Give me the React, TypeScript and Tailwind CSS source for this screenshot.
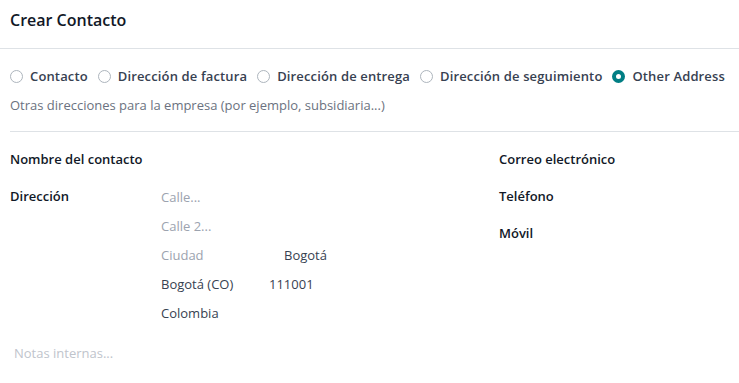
import { useState } from 'react'

const TYPES = [
  'Contacto',
  'Dirección de factura',
  'Dirección de entrega',
  'Dirección de seguimiento',
  'Other Address',
]

function Radio({ label, checked, onClick }: { label: string; checked: boolean; onClick: () => void }) {
  return (
    <label className="flex items-center gap-[7px] cursor-pointer" onClick={onClick}>
      <span
        className={`w-[13px] h-[13px] rounded-full flex-shrink-0 bg-white ${
          checked ? 'border-[4px] border-[#017e84]' : 'border border-[#adb5bd]'
        }`}
      />
      <span className="font-semibold tracking-[0.14px] text-[#374151]">{label}</span>
    </label>
  )
}

export default function App() {
  const [type, setType] = useState('Other Address')

  return (
    <div className="w-[739px] h-[383px] bg-white text-[13px] text-[#374151] font-['Open_Sans',sans-serif]">
      {/* Cabecera */}
      <div className="h-[49px] flex items-center px-[10px] border-b border-[#dee2e6]">
        <h1 className="text-[16px] font-semibold text-[#111827] -mt-[9px]">Crear Contacto</h1>
      </div>

      <div className="pl-[10px]">
        {/* Tipo de dirección */}
        <div className="flex items-center gap-[10px] pt-[10px] h-[45px] whitespace-nowrap">
          {TYPES.map(t => (
            <Radio key={t} label={t} checked={type === t} onClick={() => setType(t)} />
          ))}
        </div>
        <p className="text-[#6b7280] h-[37px] pt-[2px]">Otras direcciones para la empresa (por ejemplo, subsidiaria...)</p>

        <div className="border-t border-[#dee2e6]" />

        {/* Campos */}
        <div className="flex pt-[18px]">
          <div className="w-[489px]">
            <div className="h-[37px] font-semibold text-[#111827]">Nombre del contacto</div>
            <div className="flex">
              <div className="w-[151px] font-semibold text-[#111827]">Dirección</div>
              <div className="flex flex-col pt-[1px]">
                <div className="h-[29px] text-[#9ca3af]">Calle...</div>
                <div className="h-[29px] text-[#9ca3af]">Calle 2...</div>
                <div className="h-[29px] flex">
                  <span className="w-[123px] text-[#9ca3af]">Ciudad</span>
                  <span>Bogotá</span>
                </div>
                <div className="h-[29px] flex">
                  <span className="w-[108px]">Bogotá (CO)</span>
                  <span>111001</span>
                </div>
                <div className="h-[29px]">Colombia</div>
              </div>
            </div>
          </div>
          <div className="flex flex-col font-semibold text-[#111827]">
            <div className="h-[37px]">Correo electrónico</div>
            <div className="h-[37px]">Teléfono</div>
            <div className="h-[37px]">Móvil</div>
          </div>
        </div>

        <div className="pt-[11px] pl-[4px] text-[#c0c4cc]">Notas internas...</div>
      </div>
    </div>
  )
}
